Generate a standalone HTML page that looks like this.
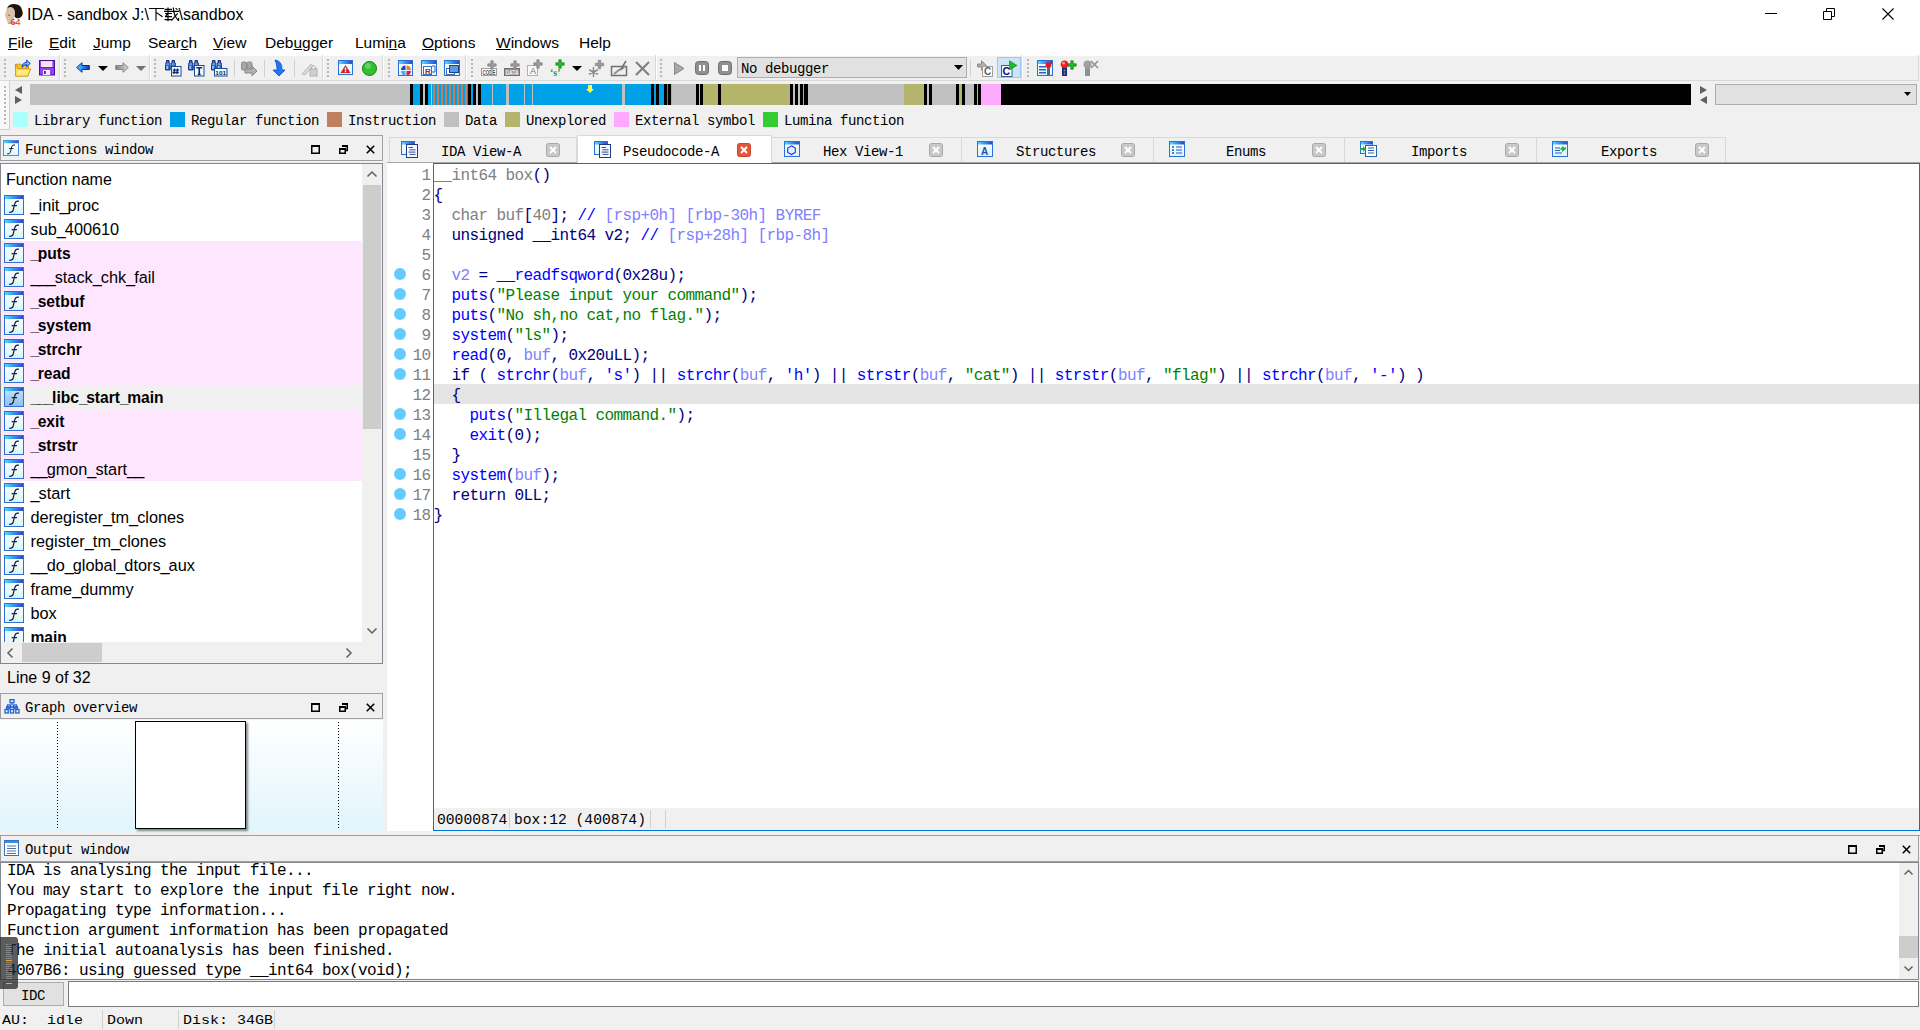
<!DOCTYPE html><html><head><meta charset="utf-8"><style>
*{margin:0;padding:0;box-sizing:border-box}
html,body{width:1920px;height:1030px;overflow:hidden;background:#f0f0f0;font-family:"Liberation Sans",sans-serif;position:relative}
.a{position:absolute}
.m{font-family:"Liberation Mono",monospace;white-space:pre}
.s{font-family:"Liberation Sans",sans-serif;white-space:pre}
svg{position:absolute;overflow:visible}
u{text-decoration:underline;text-decoration-thickness:1px;text-underline-offset:1px}
.ss{font-family:"Liberation Mono",monospace;white-space:pre;font-size:14px;letter-spacing:-0.4px;line-height:16px;color:#000;transform:scaleY(1.1);transform-origin:0 11.3px}
</style></head><body>
<svg width="0" height="0" style="position:absolute"><defs><linearGradient id="gt" x1="0" y1="0" x2="1" y2="0"><stop offset="0" stop-color="#48e0ff"/><stop offset="0.5" stop-color="#3a90e8"/><stop offset="1" stop-color="#3048c8"/></linearGradient><linearGradient id="gi" x1="0" y1="0" x2="0" y2="1"><stop offset="0" stop-color="#ffffff"/><stop offset="1" stop-color="#d8f6fb"/></linearGradient><linearGradient id="gs" x1="0" y1="0" x2="0" y2="1"><stop offset="0" stop-color="#c8e4fa"/><stop offset="1" stop-color="#90c0ec"/></linearGradient></defs></svg>
<div class="a" style="left:0px;top:0px;width:1920px;height:55px;background:#fff"></div>
<svg style="left:2px;top:3px" width="22" height="22" viewBox="0 0 22 22"><path d="M5 6Q6 1 12 1Q19 1 20 7Q22 11 19 14Q17 16 14 15Z" fill="#1e140e"/><path d="M4 8Q5 4 9 4Q13 5 13 10Q13 15 11 17L12 20Q9 21 6 20Q4 16 3 12Z" fill="#dcc0a8"/><path d="M5 21Q10 17 18 21Z" fill="#c8a088"/><path d="M6 12L8 12.5" stroke="#705040" stroke-width="0.8"/><text x="8.5" y="21.5" font-size="9" fill="#e82010" font-family="Liberation Sans">64</text></svg>
<div class="a s" style="left:27px;top:5px;font-size:16px;line-height:20px;color:#000">IDA - sandbox J:\</div>
<div class="a s" style="left:150px;top:3px;"></div>
<svg style="left:149px;top:7px" width="32" height="16" viewBox="0 0 32 16"><g stroke="#000" stroke-width="1.15" fill="none" stroke-linecap="butt"><path d="M0 1.5H15M7 1.5V13.8M7.5 5.6L13.5 9.7"/><path d="M15.5 2.4H23M15 4.4H30.2M16 6.5H23M16 9.6H23M15.5 12.6H23M19 0.6V14.2M18.3 6.8L16.6 9.4M24.3 0.6Q24.6 9 29.6 13.8M29.6 13.8V11M28.6 6.3L22.4 13.6M26.6 1.2L28.4 2.6"/></g></svg>
<div class="a s" style="left:178.5px;top:5px;font-size:16px;line-height:20px;color:#000">\sandbox</div>
<div class="a s" style="left:8px;top:34px;font-size:15.5px;line-height:17px;color:#000"><u>F</u>ile</div>
<div class="a s" style="left:49px;top:34px;font-size:15.5px;line-height:17px;color:#000"><u>E</u>dit</div>
<div class="a s" style="left:93px;top:34px;font-size:15.5px;line-height:17px;color:#000"><u>J</u>ump</div>
<div class="a s" style="left:148px;top:34px;font-size:15.5px;line-height:17px;color:#000">Sear<u>c</u>h</div>
<div class="a s" style="left:213px;top:34px;font-size:15.5px;line-height:17px;color:#000"><u>V</u>iew</div>
<div class="a s" style="left:265px;top:34px;font-size:15.5px;line-height:17px;color:#000">Deb<u>u</u>gger</div>
<div class="a s" style="left:355px;top:34px;font-size:15.5px;line-height:17px;color:#000">Lumi<u>n</u>a</div>
<div class="a s" style="left:422px;top:34px;font-size:15.5px;line-height:17px;color:#000"><u>O</u>ptions</div>
<div class="a s" style="left:496px;top:34px;font-size:15.5px;line-height:17px;color:#000"><u>W</u>indows</div>
<div class="a s" style="left:579px;top:34px;font-size:15.5px;line-height:17px;color:#000">Help</div>
<div class="a" style="left:0px;top:55px;width:1919px;height:26px;background:#f0f0f0;border-top:1px solid #fdfdfd;border-bottom:1px solid #d8d8d8;border-right:1px solid #d8d8d8"></div>
<svg style="left:4px;top:59px" width="2" height="20" viewBox="0 0 2 20"><rect x="0" y="0" width="2" height="2" fill="#b8b8b8"/><rect x="0" y="4" width="2" height="2" fill="#b8b8b8"/><rect x="0" y="8" width="2" height="2" fill="#b8b8b8"/><rect x="0" y="12" width="2" height="2" fill="#b8b8b8"/><rect x="0" y="16" width="2" height="2" fill="#b8b8b8"/></svg>
<div class="a" style="left:59px;top:55px;width:1px;height:25px;background:#d8d8d8"></div>
<div class="a" style="left:60px;top:55px;width:1px;height:25px;background:#fff"></div>
<svg style="left:64px;top:59px" width="2" height="20" viewBox="0 0 2 20"><rect x="0" y="0" width="2" height="2" fill="#b8b8b8"/><rect x="0" y="4" width="2" height="2" fill="#b8b8b8"/><rect x="0" y="8" width="2" height="2" fill="#b8b8b8"/><rect x="0" y="12" width="2" height="2" fill="#b8b8b8"/><rect x="0" y="16" width="2" height="2" fill="#b8b8b8"/></svg>
<div class="a" style="left:149px;top:55px;width:1px;height:25px;background:#d8d8d8"></div>
<div class="a" style="left:150px;top:55px;width:1px;height:25px;background:#fff"></div>
<svg style="left:154px;top:59px" width="2" height="20" viewBox="0 0 2 20"><rect x="0" y="0" width="2" height="2" fill="#b8b8b8"/><rect x="0" y="4" width="2" height="2" fill="#b8b8b8"/><rect x="0" y="8" width="2" height="2" fill="#b8b8b8"/><rect x="0" y="12" width="2" height="2" fill="#b8b8b8"/><rect x="0" y="16" width="2" height="2" fill="#b8b8b8"/></svg>
<div class="a" style="left:322px;top:55px;width:1px;height:25px;background:#d8d8d8"></div>
<div class="a" style="left:323px;top:55px;width:1px;height:25px;background:#fff"></div>
<svg style="left:327px;top:59px" width="2" height="20" viewBox="0 0 2 20"><rect x="0" y="0" width="2" height="2" fill="#b8b8b8"/><rect x="0" y="4" width="2" height="2" fill="#b8b8b8"/><rect x="0" y="8" width="2" height="2" fill="#b8b8b8"/><rect x="0" y="12" width="2" height="2" fill="#b8b8b8"/><rect x="0" y="16" width="2" height="2" fill="#b8b8b8"/></svg>
<div class="a" style="left:382px;top:55px;width:1px;height:25px;background:#d8d8d8"></div>
<div class="a" style="left:383px;top:55px;width:1px;height:25px;background:#fff"></div>
<svg style="left:388px;top:59px" width="2" height="20" viewBox="0 0 2 20"><rect x="0" y="0" width="2" height="2" fill="#b8b8b8"/><rect x="0" y="4" width="2" height="2" fill="#b8b8b8"/><rect x="0" y="8" width="2" height="2" fill="#b8b8b8"/><rect x="0" y="12" width="2" height="2" fill="#b8b8b8"/><rect x="0" y="16" width="2" height="2" fill="#b8b8b8"/></svg>
<div class="a" style="left:465px;top:55px;width:1px;height:25px;background:#d8d8d8"></div>
<div class="a" style="left:466px;top:55px;width:1px;height:25px;background:#fff"></div>
<svg style="left:471px;top:59px" width="2" height="20" viewBox="0 0 2 20"><rect x="0" y="0" width="2" height="2" fill="#b8b8b8"/><rect x="0" y="4" width="2" height="2" fill="#b8b8b8"/><rect x="0" y="8" width="2" height="2" fill="#b8b8b8"/><rect x="0" y="12" width="2" height="2" fill="#b8b8b8"/><rect x="0" y="16" width="2" height="2" fill="#b8b8b8"/></svg>
<div class="a" style="left:655px;top:55px;width:1px;height:25px;background:#d8d8d8"></div>
<div class="a" style="left:656px;top:55px;width:1px;height:25px;background:#fff"></div>
<svg style="left:660px;top:59px" width="2" height="20" viewBox="0 0 2 20"><rect x="0" y="0" width="2" height="2" fill="#b8b8b8"/><rect x="0" y="4" width="2" height="2" fill="#b8b8b8"/><rect x="0" y="8" width="2" height="2" fill="#b8b8b8"/><rect x="0" y="12" width="2" height="2" fill="#b8b8b8"/><rect x="0" y="16" width="2" height="2" fill="#b8b8b8"/></svg>
<div class="a" style="left:1021px;top:55px;width:1px;height:25px;background:#d8d8d8"></div>
<div class="a" style="left:1022px;top:55px;width:1px;height:25px;background:#fff"></div>
<svg style="left:1027px;top:59px" width="2" height="20" viewBox="0 0 2 20"><rect x="0" y="0" width="2" height="2" fill="#b8b8b8"/><rect x="0" y="4" width="2" height="2" fill="#b8b8b8"/><rect x="0" y="8" width="2" height="2" fill="#b8b8b8"/><rect x="0" y="12" width="2" height="2" fill="#b8b8b8"/><rect x="0" y="16" width="2" height="2" fill="#b8b8b8"/></svg>
<div class="a" style="left:234px;top:60px;width:1px;height:17px;background:#d0d0d0"></div>
<div class="a" style="left:264px;top:60px;width:1px;height:17px;background:#d0d0d0"></div>
<div class="a" style="left:294px;top:60px;width:1px;height:17px;background:#d0d0d0"></div>
<div class="a" style="left:970px;top:60px;width:1px;height:17px;background:#d0d0d0"></div>
<svg style="left:15px;top:60px" width="17" height="17" viewBox="0 0 17 17"><path d="M0.6 4.2H6.2L7.2 5.2H13.5V9H0.6Z" fill="#f0c430" stroke="#c89400" stroke-width="0.9"/><path d="M0.6 4.2V16.2H12.8L15.6 9H3Z" fill="#fde060" stroke="#c89400" stroke-width="0.9"/><path d="M3.5 9.5H14.6L12.2 15.3H1.6Z" fill="#fff090" opacity="0.6"/><path d="M7 7.2Q7.4 2.6 11.6 2.4V0.2L15.3 3.4L11.6 6.8V4.6Q9 4.7 7 7.2Z" fill="#40d8ff" stroke="#0a20d0" stroke-width="0.9"/></svg>
<svg style="left:39px;top:60px" width="16" height="16" viewBox="0 0 16 16"><rect x="0.5" y="0.5" width="15" height="14.5" fill="#9a3ef4" stroke="#4010a0"/><rect x="2.5" y="1.5" width="10.5" height="5.5" fill="#f6e4ea" stroke="#fff" stroke-width="0.6"/><rect x="1" y="7" width="14" height="1" fill="#5a20c0"/><rect x="4" y="10" width="7" height="5" fill="#eceefa"/><rect x="5" y="11" width="1.8" height="3" fill="#5018b0"/></svg>
<svg style="left:76px;top:62px" width="14" height="12" viewBox="0 0 14 12"><defs><linearGradient id="ga" x1="0" y1="0" x2="1" y2="0"><stop offset="0" stop-color="#40e0ff"/><stop offset="1" stop-color="#1030c0"/></linearGradient></defs><path d="M0.7 5.5L6 0.7V3.5H13.3V7.5H6V10.3Z" fill="url(#ga)" stroke="#1020c8" stroke-width="1"/></svg>
<svg style="left:98px;top:66px" width="10" height="6" viewBox="0 0 10 6"><path d="M0 0H10L5 5Z" fill="#000"/></svg>
<svg style="left:115px;top:62px" width="14" height="12" viewBox="0 0 14 12"><defs><linearGradient id="gb" x1="0" y1="0" x2="1" y2="0"><stop offset="0" stop-color="#808080"/><stop offset="1" stop-color="#d8d8d8"/></linearGradient></defs><path d="M13.3 5.5L8 0.7V3.5H0.7V7.5H8V10.3Z" fill="url(#gb)" stroke="#8a8a8a" stroke-width="1"/></svg>
<svg style="left:136px;top:66px" width="10" height="6" viewBox="0 0 10 6"><path d="M0 0H10L5 5Z" fill="#707070"/></svg>
<svg style="left:165px;top:60px" width="17" height="17" viewBox="0 0 17 17"><path d="M1.5 0.5H4V3H4.8V5.5H5V10H0.5V5.5H0.8V3H1.5Z" fill="#3a70d0" stroke="#10207a" stroke-width="0.9"/><rect x="1.3" y="6" width="1.6" height="3" fill="#8ad0ff"/><rect x="1.2" y="3.6" width="3" height="0.9" fill="#8ad0ff"/><path d="M7.0 0.5H9.5V3H10.3V5.5H10.5V10H6.0V5.5H6.3V3H7.0Z" fill="#3a70d0" stroke="#10207a" stroke-width="0.9"/><rect x="6.8" y="6" width="1.6" height="3" fill="#8ad0ff"/><rect x="6.7" y="3.6" width="3" height="0.9" fill="#8ad0ff"/><rect x="6.5" y="6.5" width="9.5" height="9.5" fill="#f4faff" stroke="#1a4a8a"/><path d="M9.5 8.5L9 14M12.5 8.5L12 14M7.8 10.2H14M7.5 12.5H13.8" stroke="#0a2a6a" stroke-width="1.3"/></svg>
<svg style="left:188px;top:60px" width="17" height="17" viewBox="0 0 17 17"><path d="M1.5 0.5H4V3H4.8V5.5H5V10H0.5V5.5H0.8V3H1.5Z" fill="#3a70d0" stroke="#10207a" stroke-width="0.9"/><rect x="1.3" y="6" width="1.6" height="3" fill="#8ad0ff"/><rect x="1.2" y="3.6" width="3" height="0.9" fill="#8ad0ff"/><path d="M7.0 0.5H9.5V3H10.3V5.5H10.5V10H6.0V5.5H6.3V3H7.0Z" fill="#3a70d0" stroke="#10207a" stroke-width="0.9"/><rect x="6.8" y="6" width="1.6" height="3" fill="#8ad0ff"/><rect x="6.7" y="3.6" width="3" height="0.9" fill="#8ad0ff"/><rect x="6.5" y="5.5" width="9.5" height="10.5" fill="#f4faff" stroke="#1a4a8a"/><path d="M8.3 7.8H14.2M11.25 7.8V14.5M9.8 14.5H12.7" stroke="#0a2a6a" stroke-width="1.6"/></svg>
<svg style="left:211px;top:60px" width="17" height="17" viewBox="0 0 17 17"><path d="M1.5 0.5H4V3H4.8V5.5H5V10H0.5V5.5H0.8V3H1.5Z" fill="#3a70d0" stroke="#10207a" stroke-width="0.9"/><rect x="1.3" y="6" width="1.6" height="3" fill="#8ad0ff"/><rect x="1.2" y="3.6" width="3" height="0.9" fill="#8ad0ff"/><path d="M7.0 0.5H9.5V3H10.3V5.5H10.5V10H6.0V5.5H6.3V3H7.0Z" fill="#3a70d0" stroke="#10207a" stroke-width="0.9"/><rect x="6.8" y="6" width="1.6" height="3" fill="#8ad0ff"/><rect x="6.7" y="3.6" width="3" height="0.9" fill="#8ad0ff"/><rect x="3.5" y="8.5" width="12.5" height="7.5" fill="#f4faff" stroke="#1a4a8a"/><text x="4.3" y="14.6" font-size="6.2" font-weight="bold" fill="#0a2a6a" font-family="Liberation Sans" textLength="10.8" lengthAdjust="spacingAndGlyphs">101</text></svg>
<svg style="left:241px;top:60px" width="17" height="17" viewBox="0 0 17 17"><rect x="0.5" y="2" width="5" height="8" rx="1.5" fill="#a8a8a8" stroke="#888"/><rect x="6" y="2" width="5" height="8" rx="1.5" fill="#a8a8a8" stroke="#888"/><path d="M4 9H11V6L16 11L11 16V13H4Z" fill="#b0b0b0" stroke="#888"/></svg>
<svg style="left:273px;top:60px" width="13" height="17" viewBox="0 0 13 17"><path d="M2 0Q9 1 9 9V10H12L6 16L0 10H4V8Q4 4 2 0Z" fill="#1a7af0" stroke="#1040d0" stroke-width="0.8"/></svg>
<svg style="left:301px;top:60px" width="17" height="17" viewBox="0 0 17 17"><path d="M1 14L10 4L12 6L4 15Z" fill="#d8d8d8" stroke="#c0c0c0"/><rect x="9" y="9" width="7" height="7" fill="#d0d0d0" stroke="#b0b0b0"/><path d="M10.5 9V7Q12.5 4 14.5 7V9" stroke="#b0b0b0" fill="none"/></svg>
<svg style="left:338px;top:60px" width="15" height="15" viewBox="0 0 15 15"><rect x="0.5" y="0.5" width="14" height="14" fill="url(#gi)" stroke="#2a70d8"/><rect x="1" y="1" width="13" height="3" fill="url(#gt)"/><path d="M2.5 13L7.5 5L12.5 13Z" fill="#d02020"/><rect x="6.8" y="7.5" width="1.4" height="3" fill="#fff"/><rect x="6.8" y="11" width="1.4" height="1.2" fill="#fff"/></svg>
<svg style="left:362px;top:61px" width="15" height="15" viewBox="0 0 15 15"><circle cx="7.5" cy="7.5" r="7" fill="#30c030" stroke="#108010"/><circle cx="6" cy="5" r="3" fill="#80e080" opacity="0.6"/></svg>
<svg style="left:398px;top:60px" width="15" height="16" viewBox="0 0 15 16"><rect x="0.5" y="0.5" width="14" height="15" fill="url(#gi)" stroke="#2a70d8"/><rect x="1" y="1" width="13" height="3" fill="url(#gt)"/><path d="M7.5 10V5.5A4.5 4.5 0 0 0 3 10Z" fill="#2040d0"/><path d="M8.5 10V5.5A4.5 4.5 0 0 1 13 10Z" fill="#f08020"/><path d="M7.5 11V15.5A4.5 4.5 0 0 1 3 11Z" fill="#40b0f0"/><path d="M8.5 11V15.5A4.5 4.5 0 0 0 13 11Z" fill="#d02060"/></svg>
<svg style="left:421px;top:60px" width="16" height="16" viewBox="0 0 16 16"><rect x="0.5" y="0.5" width="15" height="15" fill="url(#gi)" stroke="#2a70d8"/><rect x="1" y="1" width="14" height="3" fill="url(#gt)"/><rect x="2.5" y="6.5" width="8" height="8" fill="#fff" stroke="#3a70c0"/><text x="4" y="13.5" font-size="8" font-weight="bold" fill="#a02040" font-family="Liberation Sans">R</text><path d="M11 6H14V12H11" stroke="#2a60c0" fill="none"/></svg>
<svg style="left:444px;top:60px" width="16" height="16" viewBox="0 0 16 16"><rect x="0.5" y="0.5" width="15" height="15" fill="url(#gi)" stroke="#2a70d8"/><rect x="1" y="1" width="14" height="3" fill="url(#gt)"/><rect x="2.5" y="8.5" width="8" height="6" fill="#fff" stroke="#3a70c0"/><rect x="5.5" y="5.5" width="9" height="7" fill="#5a9ae0" stroke="#20408a"/></svg>
<svg style="left:481px;top:60px" width="17" height="17" viewBox="0 0 17 17"><rect x="0.5" y="8.5" width="15" height="7" fill="#fff" stroke="#a0a0a0"/><text x="1.5" y="14.5" font-size="7" font-weight="bold" fill="#505050" font-family="Liberation Sans" textLength="13" lengthAdjust="spacingAndGlyphs">CODE</text><path d="M9.8 0.7999999999999998H12.2V3.8H15.2V6.2H12.2V9.2H9.8V6.2H6.8V3.8H9.8Z" fill="#9a9a9a" stroke="#787878" stroke-width="0.6"/></svg>
<svg style="left:504px;top:60px" width="17" height="17" viewBox="0 0 17 17"><rect x="0.5" y="8.5" width="15" height="7" fill="#909090" stroke="#707070"/><text x="1.5" y="14.5" font-size="7" font-weight="bold" fill="#f0f0f0" font-family="Liberation Sans" textLength="13" lengthAdjust="spacingAndGlyphs">DATA</text><path d="M9.8 0.7999999999999998H12.2V3.8H15.2V6.2H12.2V9.2H9.8V6.2H6.8V3.8H9.8Z" fill="#9a9a9a" stroke="#787878" stroke-width="0.6"/></svg>
<svg style="left:527px;top:60px" width="17" height="17" viewBox="0 0 17 17"><rect x="0.5" y="5.5" width="10" height="10" fill="#f8f8f8" stroke="#b0b0b0"/><text x="3" y="14" font-size="9" fill="#707070" font-family="Liberation Sans">A</text><path d="M9.8 -0.20000000000000018H12.2V2.8H15.2V5.2H12.2V8.2H9.8V5.2H6.8V2.8H9.8Z" fill="#9a9a9a" stroke="#787878" stroke-width="0.6"/></svg>
<svg style="left:550px;top:60px" width="17" height="17" viewBox="0 0 17 17"><text x="0" y="16" font-size="10" font-weight="bold" fill="#20a020" font-family="Liberation Serif">‘s’</text><path d="M8.8 -0.20000000000000018H11.2V2.8H14.2V5.2H11.2V8.2H8.8V5.2H5.8V2.8H8.8Z" fill="#20c020" stroke="#107010" stroke-width="0.6"/></svg>
<svg style="left:572px;top:66px" width="10" height="6" viewBox="0 0 10 6"><path d="M0 0H10L5 5Z" fill="#000"/></svg>
<svg style="left:588px;top:60px" width="17" height="17" viewBox="0 0 17 17"><g stroke="#8a8a8a" stroke-width="1.5" stroke-linecap="round"><path d="M5.5 7.5V16.5M1.5 10L9.5 14M9.5 10L1.5 14"/></g><circle cx="5.5" cy="12" r="1.5" fill="#8a8a8a"/><path d="M10.3 0.2999999999999998H12.7V3.3H15.7V5.7H12.7V8.7H10.3V5.7H7.3V3.3H10.3Z" fill="#9a9a9a" stroke="#787878" stroke-width="0.6"/></svg>
<svg style="left:611px;top:60px" width="17" height="17" viewBox="0 0 17 17"><rect x="0.5" y="6.5" width="15" height="9" fill="#f0f0f0" stroke="#707070" stroke-width="1.5"/><path d="M3 14L8 10Q11 9 12 8L14 6" stroke="#909090" stroke-width="2" fill="none"/><path d="M10 9L15 1" stroke="#707070" stroke-width="1.5"/></svg>
<svg style="left:634px;top:60px" width="17" height="17" viewBox="0 0 17 17"><path d="M2 2L15 15M15 2L2 15" stroke="#808080" stroke-width="2.2"/></svg>
<svg style="left:674px;top:62px" width="11" height="13" viewBox="0 0 11 13"><path d="M0.5 0.5L10 6.5L0.5 12.5Z" fill="#a8a8a8" stroke="#888"/></svg>
<svg style="left:695px;top:61px" width="14" height="14" viewBox="0 0 14 14"><rect x="0.5" y="0.5" width="13" height="13" rx="3" fill="#909090" stroke="#707070"/><rect x="4" y="4" width="2" height="6" fill="#fff"/><rect x="8" y="4" width="2" height="6" fill="#fff"/></svg>
<svg style="left:718px;top:61px" width="14" height="14" viewBox="0 0 14 14"><rect x="0.5" y="0.5" width="13" height="13" rx="3" fill="#909090" stroke="#707070"/><rect x="4" y="4" width="6" height="6" fill="#fff"/></svg>
<div class="a" style="left:737px;top:57px;width:230px;height:21px;background:#e1e1e1;border:1px solid #adadad"></div>
<div class="a ss" style="left:741px;top:60.5px;">No debugger</div>
<svg style="left:954px;top:65px" width="9" height="5" viewBox="0 0 9 5"><path d="M0 0H9L4.5 5Z" fill="#000"/></svg>
<svg style="left:977px;top:60px" width="17" height="17" viewBox="0 0 17 17"><path d="M0.5 4H4.5V0.8L9.5 5.5L4.5 10.2V7H0.5Z" fill="#b0b0b0" stroke="#707070" stroke-width="0.7"/><rect x="5.5" y="6.5" width="10" height="10" fill="#fff" stroke="#a0a0a0"/><text x="7" y="15.3" font-size="10" font-weight="bold" fill="#606060" font-family="Liberation Sans">C</text></svg>
<div class="a" style="left:997px;top:57px;width:24px;height:21px;background:#cce4f7;border:1px solid #99c9ef"></div>
<svg style="left:1001px;top:60px" width="17" height="17" viewBox="0 0 17 17"><rect x="0.5" y="5.5" width="10.5" height="11" fill="#fff" stroke="#3060a8"/><text x="1.6" y="14.8" font-size="10.5" font-weight="bold" fill="#0a0a7a" font-family="Liberation Sans">C</text><path d="M8.5 0.8L16 5.4L8.5 10Z" fill="#20b828" stroke="#107818" stroke-width="0.6"/></svg>
<svg style="left:1037px;top:60px" width="16" height="16" viewBox="0 0 16 16"><rect x="0.5" y="0.5" width="15" height="15" fill="url(#gi)" stroke="#2a70d8"/><rect x="1" y="1" width="14" height="3" fill="url(#gt)"/><rect x="2" y="6" width="7" height="1.5" fill="#3060c0"/><rect x="2" y="9" width="7" height="1.5" fill="#3060c0"/><rect x="2" y="12" width="7" height="1.5" fill="#3060c0"/><rect x="10" y="7" width="3" height="8" fill="#606080"/><circle cx="11.5" cy="5" r="3" fill="#e02020"/></svg>
<svg style="left:1060px;top:60px" width="17" height="17" viewBox="0 0 17 17"><rect x="2" y="6" width="5" height="10" fill="#1a2a78"/><circle cx="4.5" cy="10.5" r="1" fill="#909090"/><circle cx="4.5" cy="13.5" r="1" fill="#909090"/><circle cx="4.5" cy="4.3" r="3.8" fill="#f02020"/><circle cx="3.5" cy="3.2" r="1.4" fill="#ff9090"/><path d="M10.8 0.7999999999999998H13.2V3.8H16.2V6.2H13.2V9.2H10.8V6.2H7.8V3.8H10.8Z" fill="#20c020" stroke="#0a5a10" stroke-width="0.6"/></svg>
<svg style="left:1083px;top:60px" width="17" height="17" viewBox="0 0 17 17"><rect x="2" y="6" width="5" height="10" fill="#909090"/><circle cx="4.5" cy="4.5" r="4" fill="#a0a0a0"/><path d="M8 1L15 8M15 1L8 8" stroke="#909090" stroke-width="1.5"/></svg>
<!--NAV-->
<div class="a" style="left:0px;top:81px;width:10px;height:49px;background:#f8f8f8;border-right:1px solid #d0d0d0;border-bottom:1px solid #d0d0d0"></div>
<svg style="left:4px;top:86px" width="2" height="40" viewBox="0 0 2 40"><rect x="0" y="0" width="2" height="2" fill="#b8b8b8"/><rect x="0" y="4" width="2" height="2" fill="#b8b8b8"/><rect x="0" y="8" width="2" height="2" fill="#b8b8b8"/><rect x="0" y="12" width="2" height="2" fill="#b8b8b8"/><rect x="0" y="16" width="2" height="2" fill="#b8b8b8"/><rect x="0" y="20" width="2" height="2" fill="#b8b8b8"/><rect x="0" y="24" width="2" height="2" fill="#b8b8b8"/><rect x="0" y="28" width="2" height="2" fill="#b8b8b8"/><rect x="0" y="32" width="2" height="2" fill="#b8b8b8"/><rect x="0" y="36" width="2" height="2" fill="#b8b8b8"/></svg>
<svg style="left:15px;top:86px" width="8" height="18" viewBox="0 0 8 18"><path d="M7 0V8L0 4Z" fill="#606060"/><path d="M0 10V18L7 14Z" fill="#606060"/></svg>
<div class="a" style="left:30px;top:84px;width:380px;height:21px;background:#c0c0c0"></div>
<div class="a" style="left:410px;top:84px;width:3px;height:21px;background:#000"></div>
<div class="a" style="left:413px;top:84px;width:7px;height:21px;background:#00a0e6"></div>
<div class="a" style="left:420px;top:84px;width:3px;height:21px;background:#000"></div>
<div class="a" style="left:423px;top:84px;width:2px;height:21px;background:#c0c0c0"></div>
<div class="a" style="left:425px;top:84px;width:3px;height:21px;background:#000"></div>
<div class="a" style="left:428px;top:84px;width:3px;height:21px;background:#00a0e6"></div>
<div class="a" style="left:431px;top:84px;width:1px;height:21px;background:#c0c0c0"></div>
<div class="a" style="left:432px;top:84px;width:36px;height:21px;background:#00a0e6"></div>
<div class="a" style="left:468px;top:84px;width:3px;height:21px;background:#000"></div>
<div class="a" style="left:471px;top:84px;width:2px;height:21px;background:#00a0e6"></div>
<div class="a" style="left:473px;top:84px;width:3px;height:21px;background:#000"></div>
<div class="a" style="left:476px;top:84px;width:2px;height:21px;background:#c0c0c0"></div>
<div class="a" style="left:478px;top:84px;width:3px;height:21px;background:#000"></div>
<div class="a" style="left:481px;top:84px;width:11px;height:21px;background:#00a0e6"></div>
<div class="a" style="left:492px;top:84px;width:1px;height:21px;background:#c0c0c0"></div>
<div class="a" style="left:493px;top:84px;width:13px;height:21px;background:#00a0e6"></div>
<div class="a" style="left:506px;top:84px;width:3px;height:21px;background:#c0c0c0"></div>
<div class="a" style="left:509px;top:84px;width:15px;height:21px;background:#00a0e6"></div>
<div class="a" style="left:524px;top:84px;width:1px;height:21px;background:#c0c0c0"></div>
<div class="a" style="left:525px;top:84px;width:7px;height:21px;background:#00a0e6"></div>
<div class="a" style="left:532px;top:84px;width:1px;height:21px;background:#c0c0c0"></div>
<div class="a" style="left:533px;top:84px;width:89px;height:21px;background:#00a0e6"></div>
<div class="a" style="left:622px;top:84px;width:3px;height:21px;background:#c0c0c0"></div>
<div class="a" style="left:625px;top:84px;width:26px;height:21px;background:#00a0e6"></div>
<div class="a" style="left:651px;top:84px;width:3px;height:21px;background:#000"></div>
<div class="a" style="left:654px;top:84px;width:2px;height:21px;background:#00a0e6"></div>
<div class="a" style="left:656px;top:84px;width:3px;height:21px;background:#000"></div>
<div class="a" style="left:659px;top:84px;width:5px;height:21px;background:#00a0e6"></div>
<div class="a" style="left:664px;top:84px;width:3px;height:21px;background:#000"></div>
<div class="a" style="left:667px;top:84px;width:1px;height:21px;background:#00a0e6"></div>
<div class="a" style="left:668px;top:84px;width:3px;height:21px;background:#000"></div>
<div class="a" style="left:671px;top:84px;width:1px;height:21px;background:#b4b46c"></div>
<div class="a" style="left:672px;top:84px;width:24px;height:21px;background:#c0c0c0"></div>
<div class="a" style="left:696px;top:84px;width:3px;height:21px;background:#000"></div>
<div class="a" style="left:699px;top:84px;width:1px;height:21px;background:#c0c0c0"></div>
<div class="a" style="left:700px;top:84px;width:3px;height:21px;background:#000"></div>
<div class="a" style="left:703px;top:84px;width:15px;height:21px;background:#b4b46c"></div>
<div class="a" style="left:718px;top:84px;width:3px;height:21px;background:#000"></div>
<div class="a" style="left:721px;top:84px;width:69px;height:21px;background:#b4b46c"></div>
<div class="a" style="left:790px;top:84px;width:3px;height:21px;background:#000"></div>
<div class="a" style="left:793px;top:84px;width:2px;height:21px;background:#c0c0c0"></div>
<div class="a" style="left:795px;top:84px;width:3px;height:21px;background:#000"></div>
<div class="a" style="left:798px;top:84px;width:2px;height:21px;background:#c0c0c0"></div>
<div class="a" style="left:800px;top:84px;width:3px;height:21px;background:#000"></div>
<div class="a" style="left:803px;top:84px;width:1px;height:21px;background:#b4b46c"></div>
<div class="a" style="left:804px;top:84px;width:4px;height:21px;background:#000"></div>
<div class="a" style="left:808px;top:84px;width:96px;height:21px;background:#c0c0c0"></div>
<div class="a" style="left:904px;top:84px;width:20px;height:21px;background:#b4b46c"></div>
<div class="a" style="left:924px;top:84px;width:3px;height:21px;background:#000"></div>
<div class="a" style="left:927px;top:84px;width:2px;height:21px;background:#c0c0c0"></div>
<div class="a" style="left:929px;top:84px;width:3px;height:21px;background:#000"></div>
<div class="a" style="left:932px;top:84px;width:24px;height:21px;background:#c0c0c0"></div>
<div class="a" style="left:956px;top:84px;width:3px;height:21px;background:#000"></div>
<div class="a" style="left:959px;top:84px;width:3px;height:21px;background:#b4b46c"></div>
<div class="a" style="left:962px;top:84px;width:3px;height:21px;background:#000"></div>
<div class="a" style="left:965px;top:84px;width:9px;height:21px;background:#c0c0c0"></div>
<div class="a" style="left:974px;top:84px;width:3px;height:21px;background:#000"></div>
<div class="a" style="left:977px;top:84px;width:1px;height:21px;background:#b4b46c"></div>
<div class="a" style="left:978px;top:84px;width:3px;height:21px;background:#000"></div>
<div class="a" style="left:981px;top:84px;width:20px;height:21px;background:#ffa8ff"></div>
<div class="a" style="left:1001px;top:84px;width:690px;height:21px;background:#000"></div>
<div class="a" style="left:433px;top:84px;width:2px;height:21px;background:#c08060"></div>
<div class="a" style="left:437px;top:84px;width:2px;height:21px;background:#c08060"></div>
<div class="a" style="left:441px;top:84px;width:2px;height:21px;background:#c08060"></div>
<div class="a" style="left:445px;top:84px;width:2px;height:21px;background:#c08060"></div>
<div class="a" style="left:449px;top:84px;width:2px;height:21px;background:#c08060"></div>
<div class="a" style="left:453px;top:84px;width:2px;height:21px;background:#c08060"></div>
<div class="a" style="left:457px;top:84px;width:2px;height:21px;background:#c08060"></div>
<div class="a" style="left:461px;top:84px;width:2px;height:21px;background:#c08060"></div>
<div class="a" style="left:465px;top:84px;width:2px;height:21px;background:#c08060"></div>
<svg style="left:586px;top:85px" width="8" height="9" viewBox="0 0 8 9"><path d="M2 0H6V4H8L4 8L0 4H2Z" fill="#ffff40"/></svg>
<svg style="left:1700px;top:86px" width="8" height="18" viewBox="0 0 8 18"><path d="M0 0V8L7 4Z" fill="#606060"/><path d="M7 10V18L0 14Z" fill="#606060"/></svg>
<div class="a" style="left:1715px;top:84px;width:202px;height:21px;background:#e1e1e1;border:1px solid #adadad"></div>
<svg style="left:1904px;top:92px" width="7" height="4" viewBox="0 0 7 4"><path d="M0 0H7L3.5 4Z" fill="#000"/></svg>
<div class="a" style="left:13px;top:112px;width:15px;height:15px;background:#aaffff"></div>
<div class="a ss" style="left:34px;top:113px;">Library function</div>
<div class="a" style="left:170px;top:112px;width:15px;height:15px;background:#00a0e6"></div>
<div class="a ss" style="left:191px;top:113px;">Regular function</div>
<div class="a" style="left:327px;top:112px;width:15px;height:15px;background:#c08060"></div>
<div class="a ss" style="left:348px;top:113px;">Instruction</div>
<div class="a" style="left:444px;top:112px;width:15px;height:15px;background:#c0c0c0"></div>
<div class="a ss" style="left:465px;top:113px;">Data</div>
<div class="a" style="left:505px;top:112px;width:15px;height:15px;background:#b4b46c"></div>
<div class="a ss" style="left:526px;top:113px;">Unexplored</div>
<div class="a" style="left:614px;top:112px;width:15px;height:15px;background:#ffa8ff"></div>
<div class="a ss" style="left:635px;top:113px;">External symbol</div>
<div class="a" style="left:763px;top:112px;width:15px;height:15px;background:#33cc33"></div>
<div class="a ss" style="left:784px;top:113px;">Lumina function</div>
<div class="a" style="left:0px;top:135px;width:383px;height:26px;background:#f0f0f0;border:1px solid #a0a0a0"></div>
<svg style="left:3px;top:140px" width="16" height="16" viewBox="0 0 20 20"><rect x="0.5" y="0.5" width="19" height="19" fill="url(#gi)" stroke="#2f6fd8"/><rect x="1" y="1" width="18" height="3" fill="url(#gt)"/><path d="M15 6.2Q11.6 5.4 10.8 8.6L9.2 15.2Q8.6 17.6 5.2 17.4" fill="none" stroke="#1a2438" stroke-width="1.25"/><path d="M7.6 10.6H13" stroke="#1a2438" stroke-width="1.2"/></svg>
<div class="a ss" style="left:25px;top:142px;">Functions window</div>
<svg style="left:311px;top:145px" width="9" height="9" viewBox="0 0 9 9"><rect x="0.75" y="0.75" width="7.5" height="7.5" fill="none" stroke="#000" stroke-width="1.5"/><rect x="0" y="0" width="9" height="2" fill="#000"/></svg>
<svg style="left:339px;top:145px" width="9" height="9" viewBox="0 0 9 9"><path d="M3 0.75H8.25V5.5H6.5" fill="none" stroke="#000" stroke-width="1.5"/><rect x="3" y="0" width="6" height="2" fill="#000"/><rect x="0.75" y="3.75" width="5.5" height="4.5" fill="none" stroke="#000" stroke-width="1.5"/><rect x="0" y="3" width="7" height="2" fill="#000"/></svg>
<svg style="left:366px;top:145px" width="9" height="9" viewBox="0 0 9 9"><path d="M0.8 0.8L8.2 8.2M8.2 0.8L0.8 8.2" stroke="#000" stroke-width="1.6"/></svg>
<div class="a" style="left:0px;top:163px;width:383px;height:501px;background:#fff;border:1px solid #828790"></div>
<div class="a s" style="left:6px;top:170px;font-size:16px;line-height:20px;color:#000">Function name</div>
<div class="a" style="left:1px;top:193px;width:361px;height:449px;overflow:hidden">
<svg style="left:3px;top:2px" width="20" height="20" viewBox="0 0 20 20"><rect x="0.5" y="0.5" width="19" height="19" fill="url(#gi)" stroke="#2f6fd8"/><rect x="1" y="1" width="18" height="3" fill="url(#gt)"/><path d="M15 6.2Q11.6 5.4 10.8 8.6L9.2 15.2Q8.6 17.6 5.2 17.4" fill="none" stroke="#1a2438" stroke-width="1.25"/><path d="M7.6 10.6H13" stroke="#1a2438" stroke-width="1.2"/></svg>
<div class="a s" style="left:29.5px;top:2.4px;font-size:16.3px;line-height:20px;color:#000;"><span style="letter-spacing:-1px">_</span>init<span style="letter-spacing:-1px">_</span>proc</div>
<svg style="left:3px;top:26px" width="20" height="20" viewBox="0 0 20 20"><rect x="0.5" y="0.5" width="19" height="19" fill="url(#gi)" stroke="#2f6fd8"/><rect x="1" y="1" width="18" height="3" fill="url(#gt)"/><path d="M15 6.2Q11.6 5.4 10.8 8.6L9.2 15.2Q8.6 17.6 5.2 17.4" fill="none" stroke="#1a2438" stroke-width="1.25"/><path d="M7.6 10.6H13" stroke="#1a2438" stroke-width="1.2"/></svg>
<div class="a s" style="left:29.5px;top:26.4px;font-size:16.3px;line-height:20px;color:#000;">sub<span style="letter-spacing:-1px">_</span>400610</div>
<div class="a" style="left:0px;top:48px;width:361px;height:24px;background:#ffe6ff"></div>
<svg style="left:3px;top:50px" width="20" height="20" viewBox="0 0 20 20"><rect x="0.5" y="0.5" width="19" height="19" fill="url(#gi)" stroke="#2f6fd8"/><rect x="1" y="1" width="18" height="3" fill="url(#gt)"/><path d="M15 6.2Q11.6 5.4 10.8 8.6L9.2 15.2Q8.6 17.6 5.2 17.4" fill="none" stroke="#1a2438" stroke-width="1.25"/><path d="M7.6 10.6H13" stroke="#1a2438" stroke-width="1.2"/></svg>
<div class="a s" style="left:29.5px;top:51px;font-size:15.6px;line-height:20px;color:#000;font-weight:bold;"><span style="letter-spacing:-1.5px">_</span>puts</div>
<div class="a" style="left:0px;top:72px;width:361px;height:24px;background:#ffe6ff"></div>
<svg style="left:3px;top:74px" width="20" height="20" viewBox="0 0 20 20"><rect x="0.5" y="0.5" width="19" height="19" fill="url(#gi)" stroke="#2f6fd8"/><rect x="1" y="1" width="18" height="3" fill="url(#gt)"/><path d="M15 6.2Q11.6 5.4 10.8 8.6L9.2 15.2Q8.6 17.6 5.2 17.4" fill="none" stroke="#1a2438" stroke-width="1.25"/><path d="M7.6 10.6H13" stroke="#1a2438" stroke-width="1.2"/></svg>
<div class="a s" style="left:29.5px;top:74.4px;font-size:16.3px;line-height:20px;color:#000;"><span style="letter-spacing:-1px">_</span><span style="letter-spacing:-1px">_</span><span style="letter-spacing:-1px">_</span>stack<span style="letter-spacing:-1px">_</span>chk<span style="letter-spacing:-1px">_</span>fail</div>
<div class="a" style="left:0px;top:96px;width:361px;height:24px;background:#ffe6ff"></div>
<svg style="left:3px;top:98px" width="20" height="20" viewBox="0 0 20 20"><rect x="0.5" y="0.5" width="19" height="19" fill="url(#gi)" stroke="#2f6fd8"/><rect x="1" y="1" width="18" height="3" fill="url(#gt)"/><path d="M15 6.2Q11.6 5.4 10.8 8.6L9.2 15.2Q8.6 17.6 5.2 17.4" fill="none" stroke="#1a2438" stroke-width="1.25"/><path d="M7.6 10.6H13" stroke="#1a2438" stroke-width="1.2"/></svg>
<div class="a s" style="left:29.5px;top:99px;font-size:15.6px;line-height:20px;color:#000;font-weight:bold;"><span style="letter-spacing:-1.5px">_</span>setbuf</div>
<div class="a" style="left:0px;top:120px;width:361px;height:24px;background:#ffe6ff"></div>
<svg style="left:3px;top:122px" width="20" height="20" viewBox="0 0 20 20"><rect x="0.5" y="0.5" width="19" height="19" fill="url(#gi)" stroke="#2f6fd8"/><rect x="1" y="1" width="18" height="3" fill="url(#gt)"/><path d="M15 6.2Q11.6 5.4 10.8 8.6L9.2 15.2Q8.6 17.6 5.2 17.4" fill="none" stroke="#1a2438" stroke-width="1.25"/><path d="M7.6 10.6H13" stroke="#1a2438" stroke-width="1.2"/></svg>
<div class="a s" style="left:29.5px;top:123px;font-size:15.6px;line-height:20px;color:#000;font-weight:bold;"><span style="letter-spacing:-1.5px">_</span>system</div>
<div class="a" style="left:0px;top:144px;width:361px;height:24px;background:#ffe6ff"></div>
<svg style="left:3px;top:146px" width="20" height="20" viewBox="0 0 20 20"><rect x="0.5" y="0.5" width="19" height="19" fill="url(#gi)" stroke="#2f6fd8"/><rect x="1" y="1" width="18" height="3" fill="url(#gt)"/><path d="M15 6.2Q11.6 5.4 10.8 8.6L9.2 15.2Q8.6 17.6 5.2 17.4" fill="none" stroke="#1a2438" stroke-width="1.25"/><path d="M7.6 10.6H13" stroke="#1a2438" stroke-width="1.2"/></svg>
<div class="a s" style="left:29.5px;top:147px;font-size:15.6px;line-height:20px;color:#000;font-weight:bold;"><span style="letter-spacing:-1.5px">_</span>strchr</div>
<div class="a" style="left:0px;top:168px;width:361px;height:24px;background:#ffe6ff"></div>
<svg style="left:3px;top:170px" width="20" height="20" viewBox="0 0 20 20"><rect x="0.5" y="0.5" width="19" height="19" fill="url(#gi)" stroke="#2f6fd8"/><rect x="1" y="1" width="18" height="3" fill="url(#gt)"/><path d="M15 6.2Q11.6 5.4 10.8 8.6L9.2 15.2Q8.6 17.6 5.2 17.4" fill="none" stroke="#1a2438" stroke-width="1.25"/><path d="M7.6 10.6H13" stroke="#1a2438" stroke-width="1.2"/></svg>
<div class="a s" style="left:29.5px;top:171px;font-size:15.6px;line-height:20px;color:#000;font-weight:bold;"><span style="letter-spacing:-1.5px">_</span>read</div>
<div class="a" style="left:0px;top:192px;width:361px;height:24px;background:#f0f0f0"></div>
<svg style="left:3px;top:194px" width="20" height="20" viewBox="0 0 20 20"><rect x="0.5" y="0.5" width="19" height="19" fill="url(#gs)" stroke="#2f6fd8"/><rect x="1" y="1" width="18" height="3" fill="url(#gt)"/><path d="M15 6.2Q11.6 5.4 10.8 8.6L9.2 15.2Q8.6 17.6 5.2 17.4" fill="none" stroke="#1a2438" stroke-width="1.25"/><path d="M7.6 10.6H13" stroke="#1a2438" stroke-width="1.2"/></svg>
<div class="a s" style="left:29.5px;top:195px;font-size:15.6px;line-height:20px;color:#000;font-weight:bold;"><span style="letter-spacing:-1.5px">_</span><span style="letter-spacing:-1.5px">_</span><span style="letter-spacing:-1.5px">_</span>libc<span style="letter-spacing:-1.5px">_</span>start<span style="letter-spacing:-1.5px">_</span>main</div>
<div class="a" style="left:0px;top:216px;width:361px;height:24px;background:#ffe6ff"></div>
<svg style="left:3px;top:218px" width="20" height="20" viewBox="0 0 20 20"><rect x="0.5" y="0.5" width="19" height="19" fill="url(#gi)" stroke="#2f6fd8"/><rect x="1" y="1" width="18" height="3" fill="url(#gt)"/><path d="M15 6.2Q11.6 5.4 10.8 8.6L9.2 15.2Q8.6 17.6 5.2 17.4" fill="none" stroke="#1a2438" stroke-width="1.25"/><path d="M7.6 10.6H13" stroke="#1a2438" stroke-width="1.2"/></svg>
<div class="a s" style="left:29.5px;top:219px;font-size:15.6px;line-height:20px;color:#000;font-weight:bold;"><span style="letter-spacing:-1.5px">_</span>exit</div>
<div class="a" style="left:0px;top:240px;width:361px;height:24px;background:#ffe6ff"></div>
<svg style="left:3px;top:242px" width="20" height="20" viewBox="0 0 20 20"><rect x="0.5" y="0.5" width="19" height="19" fill="url(#gi)" stroke="#2f6fd8"/><rect x="1" y="1" width="18" height="3" fill="url(#gt)"/><path d="M15 6.2Q11.6 5.4 10.8 8.6L9.2 15.2Q8.6 17.6 5.2 17.4" fill="none" stroke="#1a2438" stroke-width="1.25"/><path d="M7.6 10.6H13" stroke="#1a2438" stroke-width="1.2"/></svg>
<div class="a s" style="left:29.5px;top:243px;font-size:15.6px;line-height:20px;color:#000;font-weight:bold;"><span style="letter-spacing:-1.5px">_</span>strstr</div>
<div class="a" style="left:0px;top:264px;width:361px;height:24px;background:#ffe6ff"></div>
<svg style="left:3px;top:266px" width="20" height="20" viewBox="0 0 20 20"><rect x="0.5" y="0.5" width="19" height="19" fill="url(#gi)" stroke="#2f6fd8"/><rect x="1" y="1" width="18" height="3" fill="url(#gt)"/><path d="M15 6.2Q11.6 5.4 10.8 8.6L9.2 15.2Q8.6 17.6 5.2 17.4" fill="none" stroke="#1a2438" stroke-width="1.25"/><path d="M7.6 10.6H13" stroke="#1a2438" stroke-width="1.2"/></svg>
<div class="a s" style="left:29.5px;top:266.4px;font-size:16.3px;line-height:20px;color:#000;"><span style="letter-spacing:-1px">_</span><span style="letter-spacing:-1px">_</span>gmon<span style="letter-spacing:-1px">_</span>start<span style="letter-spacing:-1px">_</span><span style="letter-spacing:-1px">_</span></div>
<svg style="left:3px;top:290px" width="20" height="20" viewBox="0 0 20 20"><rect x="0.5" y="0.5" width="19" height="19" fill="url(#gi)" stroke="#2f6fd8"/><rect x="1" y="1" width="18" height="3" fill="url(#gt)"/><path d="M15 6.2Q11.6 5.4 10.8 8.6L9.2 15.2Q8.6 17.6 5.2 17.4" fill="none" stroke="#1a2438" stroke-width="1.25"/><path d="M7.6 10.6H13" stroke="#1a2438" stroke-width="1.2"/></svg>
<div class="a s" style="left:29.5px;top:290.4px;font-size:16.3px;line-height:20px;color:#000;"><span style="letter-spacing:-1px">_</span>start</div>
<svg style="left:3px;top:314px" width="20" height="20" viewBox="0 0 20 20"><rect x="0.5" y="0.5" width="19" height="19" fill="url(#gi)" stroke="#2f6fd8"/><rect x="1" y="1" width="18" height="3" fill="url(#gt)"/><path d="M15 6.2Q11.6 5.4 10.8 8.6L9.2 15.2Q8.6 17.6 5.2 17.4" fill="none" stroke="#1a2438" stroke-width="1.25"/><path d="M7.6 10.6H13" stroke="#1a2438" stroke-width="1.2"/></svg>
<div class="a s" style="left:29.5px;top:314.4px;font-size:16.3px;line-height:20px;color:#000;">deregister<span style="letter-spacing:-1px">_</span>tm<span style="letter-spacing:-1px">_</span>clones</div>
<svg style="left:3px;top:338px" width="20" height="20" viewBox="0 0 20 20"><rect x="0.5" y="0.5" width="19" height="19" fill="url(#gi)" stroke="#2f6fd8"/><rect x="1" y="1" width="18" height="3" fill="url(#gt)"/><path d="M15 6.2Q11.6 5.4 10.8 8.6L9.2 15.2Q8.6 17.6 5.2 17.4" fill="none" stroke="#1a2438" stroke-width="1.25"/><path d="M7.6 10.6H13" stroke="#1a2438" stroke-width="1.2"/></svg>
<div class="a s" style="left:29.5px;top:338.4px;font-size:16.3px;line-height:20px;color:#000;">register<span style="letter-spacing:-1px">_</span>tm<span style="letter-spacing:-1px">_</span>clones</div>
<svg style="left:3px;top:362px" width="20" height="20" viewBox="0 0 20 20"><rect x="0.5" y="0.5" width="19" height="19" fill="url(#gi)" stroke="#2f6fd8"/><rect x="1" y="1" width="18" height="3" fill="url(#gt)"/><path d="M15 6.2Q11.6 5.4 10.8 8.6L9.2 15.2Q8.6 17.6 5.2 17.4" fill="none" stroke="#1a2438" stroke-width="1.25"/><path d="M7.6 10.6H13" stroke="#1a2438" stroke-width="1.2"/></svg>
<div class="a s" style="left:29.5px;top:362.4px;font-size:16.3px;line-height:20px;color:#000;"><span style="letter-spacing:-1px">_</span><span style="letter-spacing:-1px">_</span>do<span style="letter-spacing:-1px">_</span>global<span style="letter-spacing:-1px">_</span>dtors<span style="letter-spacing:-1px">_</span>aux</div>
<svg style="left:3px;top:386px" width="20" height="20" viewBox="0 0 20 20"><rect x="0.5" y="0.5" width="19" height="19" fill="url(#gi)" stroke="#2f6fd8"/><rect x="1" y="1" width="18" height="3" fill="url(#gt)"/><path d="M15 6.2Q11.6 5.4 10.8 8.6L9.2 15.2Q8.6 17.6 5.2 17.4" fill="none" stroke="#1a2438" stroke-width="1.25"/><path d="M7.6 10.6H13" stroke="#1a2438" stroke-width="1.2"/></svg>
<div class="a s" style="left:29.5px;top:386.4px;font-size:16.3px;line-height:20px;color:#000;">frame<span style="letter-spacing:-1px">_</span>dummy</div>
<svg style="left:3px;top:410px" width="20" height="20" viewBox="0 0 20 20"><rect x="0.5" y="0.5" width="19" height="19" fill="url(#gi)" stroke="#2f6fd8"/><rect x="1" y="1" width="18" height="3" fill="url(#gt)"/><path d="M15 6.2Q11.6 5.4 10.8 8.6L9.2 15.2Q8.6 17.6 5.2 17.4" fill="none" stroke="#1a2438" stroke-width="1.25"/><path d="M7.6 10.6H13" stroke="#1a2438" stroke-width="1.2"/></svg>
<div class="a s" style="left:29.5px;top:410.4px;font-size:16.3px;line-height:20px;color:#000;">box</div>
<svg style="left:3px;top:434px" width="20" height="20" viewBox="0 0 20 20"><rect x="0.5" y="0.5" width="19" height="19" fill="url(#gi)" stroke="#2f6fd8"/><rect x="1" y="1" width="18" height="3" fill="url(#gt)"/><path d="M15 6.2Q11.6 5.4 10.8 8.6L9.2 15.2Q8.6 17.6 5.2 17.4" fill="none" stroke="#1a2438" stroke-width="1.25"/><path d="M7.6 10.6H13" stroke="#1a2438" stroke-width="1.2"/></svg>
<div class="a s" style="left:29.5px;top:435px;font-size:15.6px;line-height:20px;color:#000;font-weight:bold;">main</div>
</div>
<div class="a" style="left:362px;top:164px;width:20px;height:478px;background:#f0f0f0"></div>
<svg style="left:367px;top:171px" width="10" height="6" viewBox="0 0 10 6"><path d="M0.5 5.5L5 1L9.5 5.5" fill="none" stroke="#606060" stroke-width="1.5"/></svg>
<div class="a" style="left:363px;top:185px;width:18px;height:244px;background:#cdcdcd"></div>
<svg style="left:367px;top:628px" width="10" height="6" viewBox="0 0 10 6"><path d="M0.5 0.5L5 5L9.5 0.5" fill="none" stroke="#606060" stroke-width="1.5"/></svg>
<div class="a" style="left:1px;top:642px;width:381px;height:21px;background:#f0f0f0"></div>
<svg style="left:7px;top:648px" width="6" height="10" viewBox="0 0 6 10"><path d="M5.5 0.5L1 5L5.5 9.5" fill="none" stroke="#606060" stroke-width="1.5"/></svg>
<div class="a" style="left:22px;top:643px;width:80px;height:19px;background:#cdcdcd"></div>
<svg style="left:346px;top:648px" width="6" height="10" viewBox="0 0 6 10"><path d="M0.5 0.5L5 5L0.5 9.5" fill="none" stroke="#606060" stroke-width="1.5"/></svg>
<div class="a s" style="left:7px;top:667.5px;font-size:16px;line-height:20px;color:#000">Line 9 of 32</div>
<div class="a" style="left:0px;top:693px;width:383px;height:26px;background:#f0f0f0;border:1px solid #a0a0a0"></div>
<svg style="left:4px;top:699px" width="16" height="15" viewBox="0 0 16 15"><g fill="none" stroke="#2060d0" stroke-width="1.3"><rect x="6" y="0.7" width="4" height="3"/><rect x="1" y="10.5" width="3.2" height="3.5"/><rect x="6.4" y="10.5" width="3.2" height="3.5"/><rect x="11.8" y="10.5" width="3.2" height="3.5"/><rect x="3.5" y="6" width="3" height="3"/><rect x="9.5" y="6" width="3" height="3"/><path d="M8 3.7V6M5 9V10.5M11 9V10.5M2.6 10.5V8H13.4V10.5"/></g></svg>
<div class="a ss" style="left:25px;top:700px;">Graph overview</div>
<svg style="left:311px;top:703px" width="9" height="9" viewBox="0 0 9 9"><rect x="0.75" y="0.75" width="7.5" height="7.5" fill="none" stroke="#000" stroke-width="1.5"/><rect x="0" y="0" width="9" height="2" fill="#000"/></svg>
<svg style="left:339px;top:703px" width="9" height="9" viewBox="0 0 9 9"><path d="M3 0.75H8.25V5.5H6.5" fill="none" stroke="#000" stroke-width="1.5"/><rect x="3" y="0" width="6" height="2" fill="#000"/><rect x="0.75" y="3.75" width="5.5" height="4.5" fill="none" stroke="#000" stroke-width="1.5"/><rect x="0" y="3" width="7" height="2" fill="#000"/></svg>
<svg style="left:366px;top:703px" width="9" height="9" viewBox="0 0 9 9"><path d="M0.8 0.8L8.2 8.2M8.2 0.8L0.8 8.2" stroke="#000" stroke-width="1.6"/></svg>
<div class="a" style="left:0px;top:720px;width:383px;height:111px;background:linear-gradient(#ffffff,#e0f5fc)"></div>
<div class="a" style="left:57px;top:722px;width:1px;height:108px;background:repeating-linear-gradient(#000 0 1px,transparent 1px 3px)"></div>
<div class="a" style="left:338px;top:722px;width:1px;height:108px;background:repeating-linear-gradient(#000 0 1px,transparent 1px 3px)"></div>
<div class="a" style="left:135px;top:721px;width:111px;height:108px;background:#fff;border:1px solid #000;box-shadow:2px 2px 2px rgba(0,0,0,0.45)"></div>
<!--TABS-->
<div class="a" style="left:389px;top:137px;width:188px;height:26px;background:#f0f0f0;border-top:1px solid #d9d9d9;border-right:1px solid #d9d9d9;border-left:1px solid #d9d9d9;"></div>
<svg style="left:401px;top:141px" width="18" height="17" viewBox="0 0 18 17"><rect x="0.5" y="0.5" width="13" height="13" fill="url(#gi)" stroke="#2a70d8"/><rect x="1" y="1" width="12" height="2.5" fill="url(#gt)"/><rect x="5.5" y="3.5" width="11" height="13" fill="#f4faff" stroke="#1e3c8a"/><path d="M7.5 6.5H12M8.5 8.8H14.5M7.5 11.1H14.5M8.5 13.4H14.5" stroke="#1e3c8a" stroke-width="0.9"/></svg>
<div class="a ss" style="left:441px;top:144px;">IDA View-A</div>
<svg style="left:546px;top:143px" width="14" height="14" viewBox="0 0 14 14"><rect x="0.5" y="0.5" width="13" height="13" rx="2" fill="#c8c8c8" stroke="#a8a8a8"/><path d="M4 4L10 10M10 4L4 10" stroke="#fff" stroke-width="2"/></svg>
<div class="a" style="left:577px;top:135px;width:195px;height:28px;background:#fff;border:1px solid #d9d9d9;border-bottom:none"></div>
<svg style="left:594px;top:141px" width="18" height="17" viewBox="0 0 18 17"><rect x="0.5" y="0.5" width="13" height="13" fill="url(#gi)" stroke="#2a70d8"/><rect x="1" y="1" width="12" height="2.5" fill="url(#gt)"/><rect x="5.5" y="3.5" width="11" height="13" fill="#f4faff" stroke="#1e3c8a"/><path d="M7.5 6.5H12M8.5 8.8H14.5M7.5 11.1H14.5M8.5 13.4H14.5" stroke="#1e3c8a" stroke-width="0.9"/></svg>
<div class="a ss" style="left:623px;top:144px;">Pseudocode-A</div>
<svg style="left:737px;top:143px" width="14" height="14" viewBox="0 0 14 14"><rect x="0.5" y="0.5" width="13" height="13" rx="2" fill="#e0573c" stroke="#c84828"/><path d="M4 4L10 10M10 4L4 10" stroke="#fff" stroke-width="2"/></svg>
<div class="a" style="left:772px;top:137px;width:190px;height:26px;background:#f0f0f0;border-top:1px solid #d9d9d9;border-right:1px solid #d9d9d9;"></div>
<svg style="left:784px;top:141px" width="16" height="16" viewBox="0 0 16 16"><rect x="0.5" y="0.5" width="15" height="15" fill="url(#gi)" stroke="#2a70d8"/><rect x="1" y="1" width="14" height="2.5" fill="url(#gt)"/><path d="M7.5 4.8L11.3 7V11.4L7.5 13.6L3.7 11.4V7Z" fill="#e4eefc" stroke="#2828f0" stroke-width="1.1"/></svg>
<div class="a ss" style="left:823px;top:144px;">Hex View-1</div>
<svg style="left:929px;top:143px" width="14" height="14" viewBox="0 0 14 14"><rect x="0.5" y="0.5" width="13" height="13" rx="2" fill="#c8c8c8" stroke="#a8a8a8"/><path d="M4 4L10 10M10 4L4 10" stroke="#fff" stroke-width="2"/></svg>
<div class="a" style="left:962px;top:137px;width:192px;height:26px;background:#f0f0f0;border-top:1px solid #d9d9d9;border-right:1px solid #d9d9d9;"></div>
<svg style="left:977px;top:141px" width="16" height="16" viewBox="0 0 16 16"><rect x="0.5" y="0.5" width="15" height="15" fill="url(#gi)" stroke="#2a70d8"/><rect x="1" y="1" width="14" height="2.5" fill="url(#gt)"/><text x="4" y="13.5" font-size="10" font-weight="bold" fill="#2050a0" font-family="Liberation Sans">A</text></svg>
<div class="a ss" style="left:1016px;top:144px;">Structures</div>
<svg style="left:1121px;top:143px" width="14" height="14" viewBox="0 0 14 14"><rect x="0.5" y="0.5" width="13" height="13" rx="2" fill="#c8c8c8" stroke="#a8a8a8"/><path d="M4 4L10 10M10 4L4 10" stroke="#fff" stroke-width="2"/></svg>
<div class="a" style="left:1154px;top:137px;width:191px;height:26px;background:#f0f0f0;border-top:1px solid #d9d9d9;border-right:1px solid #d9d9d9;"></div>
<svg style="left:1169px;top:141px" width="16" height="16" viewBox="0 0 16 16"><rect x="0.5" y="0.5" width="15" height="15" fill="url(#gi)" stroke="#2a70d8"/><rect x="1" y="1" width="14" height="2.5" fill="url(#gt)"/><path d="M3 6H5M3 9H5M3 12H5" stroke="#2050d0" stroke-width="1.5"/><path d="M7 6H13M7 9H13M7 12H13" stroke="#2050d0" stroke-width="1"/></svg>
<div class="a ss" style="left:1226px;top:144px;">Enums</div>
<svg style="left:1312px;top:143px" width="14" height="14" viewBox="0 0 14 14"><rect x="0.5" y="0.5" width="13" height="13" rx="2" fill="#c8c8c8" stroke="#a8a8a8"/><path d="M4 4L10 10M10 4L4 10" stroke="#fff" stroke-width="2"/></svg>
<div class="a" style="left:1345px;top:137px;width:192px;height:26px;background:#f0f0f0;border-top:1px solid #d9d9d9;border-right:1px solid #d9d9d9;"></div>
<svg style="left:1360px;top:141px" width="17" height="16" viewBox="0 0 17 16"><rect x="0.5" y="0.5" width="12" height="12" fill="url(#gi)" stroke="#2a70d8"/><rect x="1" y="1" width="11" height="2.5" fill="url(#gt)"/><rect x="5.5" y="4.5" width="11" height="11" fill="#fff" stroke="#2a60b0"/><path d="M8 7H14M8 9.5H14M8 12H14" stroke="#2a60b0"/><path d="M0 7H3V5L6 8L3 11V9H0Z" fill="#20b040"/></svg>
<div class="a ss" style="left:1411px;top:144px;">Imports</div>
<svg style="left:1505px;top:143px" width="14" height="14" viewBox="0 0 14 14"><rect x="0.5" y="0.5" width="13" height="13" rx="2" fill="#c8c8c8" stroke="#a8a8a8"/><path d="M4 4L10 10M10 4L4 10" stroke="#fff" stroke-width="2"/></svg>
<div class="a" style="left:1537px;top:137px;width:189px;height:26px;background:#f0f0f0;border-top:1px solid #d9d9d9;border-right:1px solid #d9d9d9;"></div>
<svg style="left:1552px;top:141px" width="17" height="16" viewBox="0 0 17 16"><rect x="0.5" y="0.5" width="15" height="15" fill="url(#gi)" stroke="#2a70d8"/><rect x="1" y="1" width="14" height="2.5" fill="url(#gt)"/><path d="M3 7H8M3 9.5H8M3 12H10" stroke="#2a60b0"/><path d="M7 9L10 6V8H14V6Z" fill="#20b040"/><path d="M8 8H10V5L14 8L10 11V9Z" fill="#20b040"/></svg>
<div class="a ss" style="left:1601px;top:144px;">Exports</div>
<svg style="left:1695px;top:143px" width="14" height="14" viewBox="0 0 14 14"><rect x="0.5" y="0.5" width="13" height="13" rx="2" fill="#c8c8c8" stroke="#a8a8a8"/><path d="M4 4L10 10M10 4L4 10" stroke="#fff" stroke-width="2"/></svg>
<div class="a" style="left:387px;top:162px;width:190px;height:1px;background:#a8a8a8"></div>
<div class="a" style="left:772px;top:162px;width:1148px;height:1px;background:#a8a8a8"></div>
<div class="a" style="left:383px;top:163px;width:4px;height:668px;background:#f0f0f0"></div>
<div class="a" style="left:387px;top:163px;width:46px;height:668px;background:#fff"></div>
<div class="a" style="left:433px;top:163px;width:1487px;height:668px;background:#fff;border:1px solid #0078d7"></div>
<div class="a" style="left:434px;top:384px;width:1485px;height:20px;background:#e4e4e4"></div>
<div class="a m" style="left:433.5px;top:166px;font-size:16px;letter-spacing:-0.6px;line-height:20px;"><span style="color:#808080">__int64 box</span><span style="color:#000080">()</span></div>
<div class="a m" style="left:421.5px;top:166px;font-size:16px;letter-spacing:-0.6px;line-height:20px;color:#808080">1</div>
<div class="a m" style="left:433.5px;top:186px;font-size:16px;letter-spacing:-0.6px;line-height:20px;"><span style="color:#000080">{</span></div>
<div class="a m" style="left:421.5px;top:186px;font-size:16px;letter-spacing:-0.6px;line-height:20px;color:#808080">2</div>
<div class="a m" style="left:433.5px;top:206px;font-size:16px;letter-spacing:-0.6px;line-height:20px;"><span style="color:#808080">  char buf</span><span style="color:#000080">[</span><span style="color:#808080">40</span><span style="color:#000080">];</span><span style="color:#0000ff"> // </span><span style="color:#8080ff">[rsp+0h] [rbp-30h] BYREF</span></div>
<div class="a m" style="left:421.5px;top:206px;font-size:16px;letter-spacing:-0.6px;line-height:20px;color:#808080">3</div>
<div class="a m" style="left:433.5px;top:226px;font-size:16px;letter-spacing:-0.6px;line-height:20px;"><span style="color:#000080">  unsigned __int64 v2;</span><span style="color:#0000ff"> // </span><span style="color:#8080ff">[rsp+28h] [rbp-8h]</span></div>
<div class="a m" style="left:421.5px;top:226px;font-size:16px;letter-spacing:-0.6px;line-height:20px;color:#808080">4</div>
<div class="a m" style="left:433.5px;top:246px;font-size:16px;letter-spacing:-0.6px;line-height:20px;"></div>
<div class="a m" style="left:421.5px;top:246px;font-size:16px;letter-spacing:-0.6px;line-height:20px;color:#808080">5</div>
<div class="a m" style="left:433.5px;top:266px;font-size:16px;letter-spacing:-0.6px;line-height:20px;"><span style="color:#000080">  </span><span style="color:#8080ff">v2</span><span style="color:#000080"> = </span><span style="color:#0000ff">__readfsqword</span><span style="color:#000080">(0x28u);</span></div>
<div class="a m" style="left:421.5px;top:266px;font-size:16px;letter-spacing:-0.6px;line-height:20px;color:#808080">6</div>
<div class="a" style="left:394px;top:268px;width:12px;height:12px;border-radius:6px;background:#62cbfd"></div>
<div class="a m" style="left:433.5px;top:286px;font-size:16px;letter-spacing:-0.6px;line-height:20px;"><span style="color:#000080">  </span><span style="color:#0000ff">puts</span><span style="color:#000080">(</span><span style="color:#008000">&quot;Please input your command&quot;</span><span style="color:#000080">);</span></div>
<div class="a m" style="left:421.5px;top:286px;font-size:16px;letter-spacing:-0.6px;line-height:20px;color:#808080">7</div>
<div class="a" style="left:394px;top:288px;width:12px;height:12px;border-radius:6px;background:#62cbfd"></div>
<div class="a m" style="left:433.5px;top:306px;font-size:16px;letter-spacing:-0.6px;line-height:20px;"><span style="color:#000080">  </span><span style="color:#0000ff">puts</span><span style="color:#000080">(</span><span style="color:#008000">&quot;No sh,no cat,no flag.&quot;</span><span style="color:#000080">);</span></div>
<div class="a m" style="left:421.5px;top:306px;font-size:16px;letter-spacing:-0.6px;line-height:20px;color:#808080">8</div>
<div class="a" style="left:394px;top:308px;width:12px;height:12px;border-radius:6px;background:#62cbfd"></div>
<div class="a m" style="left:433.5px;top:326px;font-size:16px;letter-spacing:-0.6px;line-height:20px;"><span style="color:#000080">  </span><span style="color:#0000ff">system</span><span style="color:#000080">(</span><span style="color:#008000">&quot;ls&quot;</span><span style="color:#000080">);</span></div>
<div class="a m" style="left:421.5px;top:326px;font-size:16px;letter-spacing:-0.6px;line-height:20px;color:#808080">9</div>
<div class="a" style="left:394px;top:328px;width:12px;height:12px;border-radius:6px;background:#62cbfd"></div>
<div class="a m" style="left:433.5px;top:346px;font-size:16px;letter-spacing:-0.6px;line-height:20px;"><span style="color:#000080">  </span><span style="color:#0000ff">read</span><span style="color:#000080">(0, </span><span style="color:#8080ff">buf</span><span style="color:#000080">, 0x20uLL);</span></div>
<div class="a m" style="left:412.5px;top:346px;font-size:16px;letter-spacing:-0.6px;line-height:20px;color:#808080">10</div>
<div class="a" style="left:394px;top:348px;width:12px;height:12px;border-radius:6px;background:#62cbfd"></div>
<div class="a m" style="left:433.5px;top:366px;font-size:16px;letter-spacing:-0.6px;line-height:20px;"><span style="color:#000080">  if ( </span><span style="color:#0000ff">strchr</span><span style="color:#000080">(</span><span style="color:#8080ff">buf</span><span style="color:#000080">, </span><span style="color:#0000ff">&#x27;s&#x27;</span><span style="color:#000080">)</span><span style="color:#000080"> || </span><span style="color:#0000ff">strchr</span><span style="color:#000080">(</span><span style="color:#8080ff">buf</span><span style="color:#000080">, </span><span style="color:#0000ff">&#x27;h&#x27;</span><span style="color:#000080">)</span><span style="color:#000080"> || </span><span style="color:#0000ff">strstr</span><span style="color:#000080">(</span><span style="color:#8080ff">buf</span><span style="color:#000080">, </span><span style="color:#008000">&quot;cat&quot;</span><span style="color:#000080">)</span><span style="color:#000080"> || </span><span style="color:#0000ff">strstr</span><span style="color:#000080">(</span><span style="color:#8080ff">buf</span><span style="color:#000080">, </span><span style="color:#008000">&quot;flag&quot;</span><span style="color:#000080">)</span><span style="color:#000080"> || </span><span style="color:#0000ff">strchr</span><span style="color:#000080">(</span><span style="color:#8080ff">buf</span><span style="color:#000080">, </span><span style="color:#0000ff">&#x27;-&#x27;</span><span style="color:#000080">)</span><span style="color:#000080"> )</span></div>
<div class="a m" style="left:412.5px;top:366px;font-size:16px;letter-spacing:-0.6px;line-height:20px;color:#808080">11</div>
<div class="a" style="left:394px;top:368px;width:12px;height:12px;border-radius:6px;background:#62cbfd"></div>
<div class="a m" style="left:433.5px;top:386px;font-size:16px;letter-spacing:-0.6px;line-height:20px;"><span style="color:#000080">  {</span></div>
<div class="a m" style="left:412.5px;top:386px;font-size:16px;letter-spacing:-0.6px;line-height:20px;color:#808080">12</div>
<div class="a m" style="left:433.5px;top:406px;font-size:16px;letter-spacing:-0.6px;line-height:20px;"><span style="color:#000080">    </span><span style="color:#0000ff">puts</span><span style="color:#000080">(</span><span style="color:#008000">&quot;Illegal command.&quot;</span><span style="color:#000080">);</span></div>
<div class="a m" style="left:412.5px;top:406px;font-size:16px;letter-spacing:-0.6px;line-height:20px;color:#808080">13</div>
<div class="a" style="left:394px;top:408px;width:12px;height:12px;border-radius:6px;background:#62cbfd"></div>
<div class="a m" style="left:433.5px;top:426px;font-size:16px;letter-spacing:-0.6px;line-height:20px;"><span style="color:#000080">    </span><span style="color:#0000ff">exit</span><span style="color:#000080">(0);</span></div>
<div class="a m" style="left:412.5px;top:426px;font-size:16px;letter-spacing:-0.6px;line-height:20px;color:#808080">14</div>
<div class="a" style="left:394px;top:428px;width:12px;height:12px;border-radius:6px;background:#62cbfd"></div>
<div class="a m" style="left:433.5px;top:446px;font-size:16px;letter-spacing:-0.6px;line-height:20px;"><span style="color:#000080">  }</span></div>
<div class="a m" style="left:412.5px;top:446px;font-size:16px;letter-spacing:-0.6px;line-height:20px;color:#808080">15</div>
<div class="a m" style="left:433.5px;top:466px;font-size:16px;letter-spacing:-0.6px;line-height:20px;"><span style="color:#000080">  </span><span style="color:#0000ff">system</span><span style="color:#000080">(</span><span style="color:#8080ff">buf</span><span style="color:#000080">);</span></div>
<div class="a m" style="left:412.5px;top:466px;font-size:16px;letter-spacing:-0.6px;line-height:20px;color:#808080">16</div>
<div class="a" style="left:394px;top:468px;width:12px;height:12px;border-radius:6px;background:#62cbfd"></div>
<div class="a m" style="left:433.5px;top:486px;font-size:16px;letter-spacing:-0.6px;line-height:20px;"><span style="color:#000080">  return 0LL;</span></div>
<div class="a m" style="left:412.5px;top:486px;font-size:16px;letter-spacing:-0.6px;line-height:20px;color:#808080">17</div>
<div class="a" style="left:394px;top:488px;width:12px;height:12px;border-radius:6px;background:#62cbfd"></div>
<div class="a m" style="left:433.5px;top:506px;font-size:16px;letter-spacing:-0.6px;line-height:20px;"><span style="color:#000080">}</span></div>
<div class="a m" style="left:412.5px;top:506px;font-size:16px;letter-spacing:-0.6px;line-height:20px;color:#808080">18</div>
<div class="a" style="left:394px;top:508px;width:12px;height:12px;border-radius:6px;background:#62cbfd"></div>
<div class="a" style="left:434px;top:808px;width:1485px;height:22px;background:#f0f0f0"></div>
<div class="a m" style="left:437px;top:812px;font-size:14.67px;line-height:16px;color:#000">00000874</div>
<div class="a" style="left:509px;top:810px;width:1px;height:18px;background:#d0d0d0"></div>
<div class="a m" style="left:514px;top:812px;font-size:14.67px;line-height:16px;color:#000">box:12 (400874)</div>
<div class="a" style="left:650px;top:810px;width:1px;height:18px;background:#d0d0d0"></div>
<div class="a" style="left:665px;top:810px;width:1px;height:18px;background:#d0d0d0"></div>
<div class="a" style="left:0px;top:835px;width:1920px;height:1px;background:#a0a0a0"></div>
<div class="a" style="left:0px;top:836px;width:1919px;height:26px;background:#f0f0f0;border-left:1px solid #a0a0a0;border-right:1px solid #a0a0a0;border-bottom:1px solid #a0a0a0"></div>
<svg style="left:4px;top:840px" width="15" height="16" viewBox="0 0 15 16"><rect x="0.5" y="0.5" width="14" height="15" fill="#fff" stroke="#3a70c0"/><rect x="1" y="1" width="13" height="2" fill="#3a8ae8"/><path d="M3 6H12M3 8.5H12M3 11H12M3 13.5H12" stroke="#5070a0"/></svg>
<div class="a ss" style="left:25px;top:841.5px;">Output window</div>
<svg style="left:1848px;top:845px" width="9" height="9" viewBox="0 0 9 9"><rect x="0.75" y="0.75" width="7.5" height="7.5" fill="none" stroke="#000" stroke-width="1.5"/><rect x="0" y="0" width="9" height="2" fill="#000"/></svg>
<svg style="left:1876px;top:845px" width="9" height="9" viewBox="0 0 9 9"><path d="M3 0.75H8.25V5.5H6.5" fill="none" stroke="#000" stroke-width="1.5"/><rect x="3" y="0" width="6" height="2" fill="#000"/><rect x="0.75" y="3.75" width="5.5" height="4.5" fill="none" stroke="#000" stroke-width="1.5"/><rect x="0" y="3" width="7" height="2" fill="#000"/></svg>
<svg style="left:1902px;top:845px" width="9" height="9" viewBox="0 0 9 9"><path d="M0.8 0.8L8.2 8.2M8.2 0.8L0.8 8.2" stroke="#000" stroke-width="1.5"/></svg>
<div class="a" style="left:0px;top:862px;width:1919px;height:118px;background:#fff;border:1px solid #828790"></div>
<div class="a" style="left:1px;top:863px;width:1897px;height:116px;overflow:hidden">
<div class="a m" style="left:6px;top:-2px;font-size:16px;letter-spacing:-0.6px;line-height:20px;color:#000">IDA is analysing the input file...</div>
<div class="a m" style="left:6px;top:18px;font-size:16px;letter-spacing:-0.6px;line-height:20px;color:#000">You may start to explore the input file right now.</div>
<div class="a m" style="left:6px;top:38px;font-size:16px;letter-spacing:-0.6px;line-height:20px;color:#000">Propagating type information...</div>
<div class="a m" style="left:6px;top:58px;font-size:16px;letter-spacing:-0.6px;line-height:20px;color:#000">Function argument information has been propagated</div>
<div class="a m" style="left:6px;top:78px;font-size:16px;letter-spacing:-0.6px;line-height:20px;color:#000">The initial autoanalysis has been finished.</div>
<div class="a m" style="left:6px;top:98px;font-size:16px;letter-spacing:-0.6px;line-height:20px;color:#000">4007B6: using guessed type __int64 box(void);</div>
</div>
<div class="a" style="left:1899px;top:863px;width:19px;height:116px;background:#f0f0f0"></div>
<svg style="left:1904px;top:870px" width="9" height="5" viewBox="0 0 9 5"><path d="M0.5 4.5L4.5 0.5L8.5 4.5" fill="none" stroke="#606060" stroke-width="1.5"/></svg>
<div class="a" style="left:1899px;top:936px;width:19px;height:22px;background:#cdcdcd"></div>
<svg style="left:1904px;top:966px" width="9" height="5" viewBox="0 0 9 5"><path d="M0.5 0.5L4.5 4.5L8.5 0.5" fill="none" stroke="#606060" stroke-width="1.5"/></svg>
<div class="a" style="left:3px;top:982px;width:61px;height:24px;background:#e1e1e1;border:1px solid #adadad"></div>
<div class="a ss" style="left:21px;top:987.5px;">IDC</div>
<div class="a" style="left:68px;top:981px;width:1851px;height:26px;background:#fff;border:1px solid #7a7a7a"></div>
<div class="a m" style="left:2px;top:1013px;font-size:15px;line-height:16px;color:#000;transform:scaleY(0.87);transform-origin:0 12px">AU:  idle</div>
<div class="a" style="left:102px;top:1010px;width:1px;height:19px;background:#d0d0d0"></div>
<div class="a m" style="left:107px;top:1013px;font-size:15px;line-height:16px;color:#000;transform:scaleY(0.87);transform-origin:0 12px">Down</div>
<div class="a" style="left:178px;top:1010px;width:1px;height:19px;background:#d0d0d0"></div>
<div class="a m" style="left:183px;top:1013px;font-size:15px;line-height:16px;color:#000;transform:scaleY(0.87);transform-origin:0 12px">Disk: 34GB</div>
<div class="a" style="left:274px;top:1010px;width:1px;height:19px;background:#d0d0d0"></div>
<div class="a" style="left:0px;top:937px;width:18px;height:52px;background:rgba(38,38,38,0.75);border-radius:0 3px 3px 0"></div>
<div class="a" style="left:6px;top:944px;width:6px;height:35px;background:repeating-linear-gradient(rgba(150,150,150,0.7) 0 1px,transparent 1px 2px)"></div>
<div class="a" style="left:6px;top:960px;width:6px;height:1px;background:#f0a020"></div>
<div class="a" style="left:6px;top:983px;width:6px;height:1px;background:#80e020"></div>
<svg style="left:1765px;top:13px" width="12" height="1" viewBox="0 0 12 1"><rect width="12" height="1" fill="#000"/></svg>
<svg style="left:1823px;top:8px" width="12" height="12" viewBox="0 0 12 12"><path d="M0.5 3.5H8.5V11.5H0.5Z M3.5 3.5V0.5H11.5V8.5H8.5" fill="none" stroke="#000"/></svg>
<svg style="left:1882px;top:8px" width="12" height="12" viewBox="0 0 12 12"><path d="M0.5 0.5L11.5 11.5M11.5 0.5L0.5 11.5" stroke="#000" stroke-width="1.1"/></svg>
</body></html>
